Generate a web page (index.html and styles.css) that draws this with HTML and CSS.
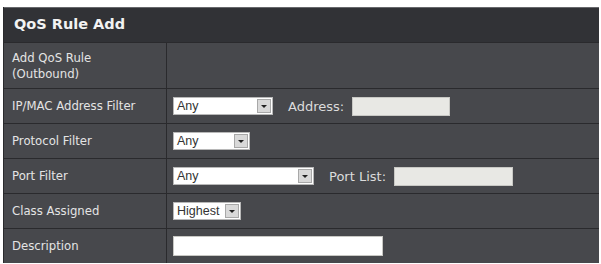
FILE: index.html
```html
<!DOCTYPE html>
<html lang="en">
<head>
  <meta charset="UTF-8">
  <title>QoS Rule Add</title>
  <link rel="stylesheet" href="styles.css">
</head>
<body>

  <div class="panel">
    <div class="panel-head">QoS Rule Add</div>

    <div class="row row-tall">
      <div class="label">Add QoS Rule<br>(Outbound)</div>
      <div class="value"></div>
    </div>

    <div class="row">
      <div class="label">IP/MAC Address Filter</div>
      <div class="value">
        <div class="select sel-ip"><span class="sel-text">Any</span><span class="sel-btn"></span></div>
        <span class="field-label">Address:</span>
        <input class="text-in in-addr" type="text">
      </div>
    </div>

    <div class="row">
      <div class="label">Protocol Filter</div>
      <div class="value">
        <div class="select sel-proto"><span class="sel-text">Any</span><span class="sel-btn"></span></div>
      </div>
    </div>

    <div class="row">
      <div class="label">Port Filter</div>
      <div class="value">
        <div class="select sel-port"><span class="sel-text">Any</span><span class="sel-btn"></span></div>
        <span class="field-label">Port List:</span>
        <input class="text-in in-port" type="text">
      </div>
    </div>

    <div class="row">
      <div class="label">Class Assigned</div>
      <div class="value">
        <div class="select sel-class"><span class="sel-text">Highest</span><span class="sel-btn"></span></div>
      </div>
    </div>

    <div class="row">
      <div class="label">Description</div>
      <div class="value">
        <input class="text-in in-desc" type="text">
      </div>
    </div>
  </div>

</body>
</html>
```

FILE: styles.css
```css
body {
  margin: 0;
  background: #fff;
  font-family: 'DejaVu Sans', Verdana, sans-serif;
}
.panel {
  margin: 7px 0 0 3px;
  width: 595px;
  background: #47484c;
  border-left: 1px solid #2a2a2d;
}
.panel-head {
  height: 34px;
  line-height: 33px;
  padding-left: 10px;
  background: #313236;
  border-top: 1px solid #67686c;
  color: #f2f2f2;
  font-weight: bold;
  font-size: 14.5px;
}
.row {
  display: flex;
  height: 34px;
  border-top: 1px solid #2a2a2d;
}
.row-tall {
  height: 45px;
}
.label {
  width: 154px;
  padding-left: 8px;
  border-right: 1px solid #2a2a2d;
  display: flex;
  align-items: center;
  color: #e4e4e4;
  font-size: 11.7px;
  line-height: 16px;
}
.value {
  flex: 1;
  display: flex;
  align-items: center;
  padding-left: 6px;
}
.select {
  height: 18px;
  box-sizing: border-box;
  background: #fff;
  border: 1px solid #b8b8b8;
  display: flex;
  align-items: center;
  font-family: 'Liberation Sans', Arial, sans-serif;
  font-size: 12.5px;
  color: #333;
}
.sel-text {
  flex: 1;
  padding-left: 3px;
}
.sel-btn {
  width: 14px;
  height: 14px;
  margin-right: 1px;
  background: #d9d9d9;
  border: 1px solid #a8a8a8;
  box-sizing: border-box;
  position: relative;
}
.sel-btn::after {
  content: "";
  position: absolute;
  left: 3px;
  top: 5px;
  border-left: 3px solid transparent;
  border-right: 3px solid transparent;
  border-top: 3px solid #222;
}
.sel-ip { width: 100px; }
.sel-proto { width: 77px; }
.sel-port { width: 141px; }
.sel-class { width: 68px; }
.field-label {
  color: #dcdcdc;
  font-size: 13px;
  margin: 0 8px 0 15px;
}
.text-in {
  height: 19px;
  box-sizing: border-box;
  border: 1px solid #c8c8c4;
  padding: 0;
  margin: 0;
}
.in-addr, .in-port {
  background: #e8e8e4;
}
.in-addr { width: 98px; }
.in-port { width: 119px; }
.in-desc {
  width: 210px;
  height: 20px;
  background: #fff;
}
```
